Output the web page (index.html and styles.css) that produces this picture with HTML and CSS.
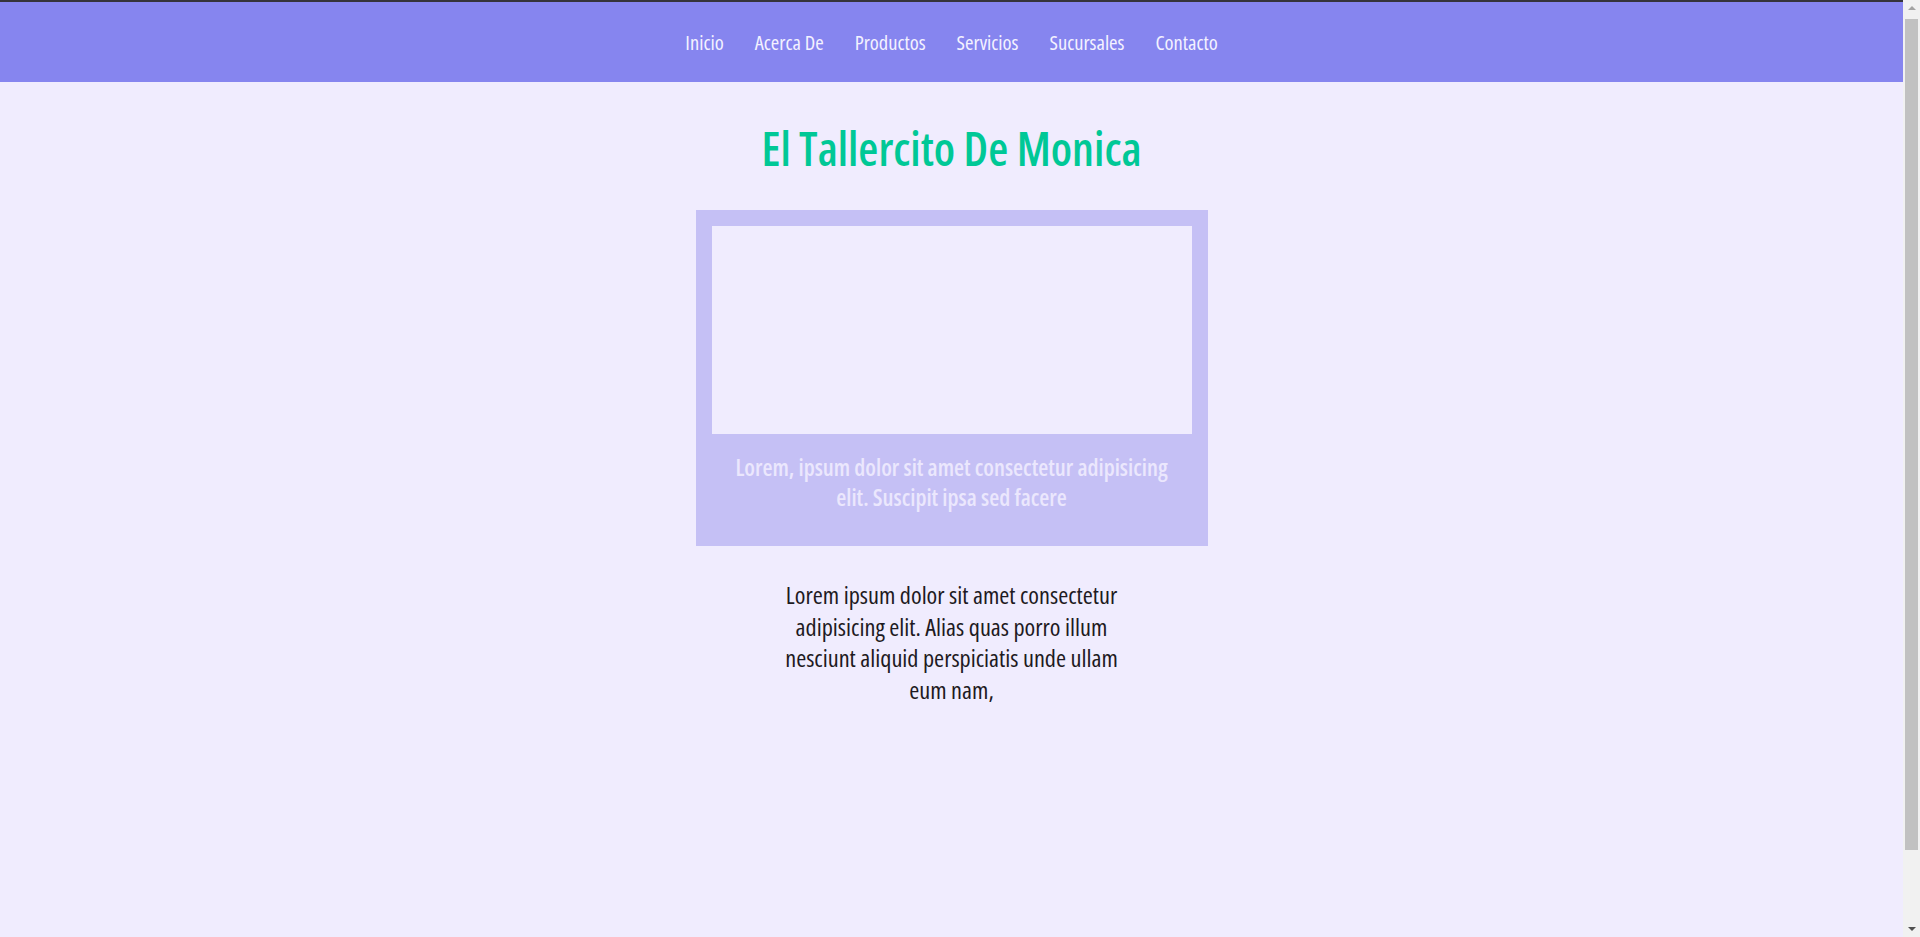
FILE: index.html
```html
<!DOCTYPE html>
<html lang="es">
<head>
<meta charset="utf-8">
<title>El Tallercito De Monica</title>
<link rel="stylesheet" href="styles.css">
</head>
<body>
<div class="page">
  <header class="topbar">
    <nav class="menu">
      <a href="#" class="menu-link">Inicio</a>
      <a href="#" class="menu-link">Acerca De</a>
      <a href="#" class="menu-link">Productos</a>
      <a href="#" class="menu-link">Servicios</a>
      <a href="#" class="menu-link">Sucursales</a>
      <a href="#" class="menu-link">Contacto</a>
    </nav>
  </header>
  <main class="content">
    <h1 class="title">El Tallercito De Monica</h1>
    <section class="card">
      <div class="card-image"></div>
      <p class="card-caption">Lorem, ipsum dolor sit amet consectetur adipisicing elit. Suscipit ipsa sed facere</p>
    </section>
    <p class="intro">Lorem ipsum dolor sit amet consectetur adipisicing elit. Alias quas porro illum nesciunt aliquid perspiciatis unde ullam eum nam,</p>
  </main>
</div>
<div class="scrollbar" aria-hidden="true">
  <span class="sb-arrow sb-up"></span>
  <span class="sb-track"><span class="sb-thumb"></span></span>
  <span class="sb-arrow sb-down"></span>
</div>
</body>
</html>
```
FILE: styles.css
```css
html, body {
  margin: 0;
  padding: 0;
}
body {
  background: #f0ecfe;
  font-family: "Open Sans", "Roboto", sans-serif;
  font-stretch: 75%;
  height: 937px;
  overflow: hidden;
}
.page {
  margin-right: 17px;
}
.topbar {
  background: #8685ef;
  border-top: 2px solid #35343b;
  height: 80px;
  display: flex;
  align-items: center;
  justify-content: center;
}
.menu {
  display: flex;
  gap: 31px;
}
.menu-link {
  color: #f4f2ff;
  text-decoration: none;
  font-size: 20.5px;
  font-weight: 520;
}
.content {
  display: flex;
  flex-direction: column;
  align-items: center;
}
.title {
  margin: 38px 0 0;
  font-size: 46px;
  line-height: 56px;
  font-weight: 600;
  color: #00c896;
}
.card {
  margin-top: 34px;
  width: 480px;
  padding: 16px;
  background: #c5c0f5;
}
.card-image {
  height: 208px;
  background: #f0ecfe;
}
.card-caption {
  margin: 18px 0 0;
  padding: 0 8px 18px;
  text-align: center;
  font-size: 23px;
  line-height: 30px;
  font-weight: 600;
  color: #ebe7fd;
}
.intro {
  margin: 33px 0 0;
  width: 350px;
  text-align: center;
  font-size: 24.3px;
  line-height: 31.5px;
  font-weight: 520;
  color: #1e1a22;
}
.scrollbar {
  position: fixed;
  top: 0;
  right: 0;
  width: 17px;
  height: 937px;
  background: #f1f1f1;
  display: flex;
  flex-direction: column;
  align-items: center;
}
.sb-arrow {
  width: 0;
  height: 0;
  border-left: 4px solid transparent;
  border-right: 4px solid transparent;
}
.sb-up {
  margin-top: 6px;
  border-bottom: 4px solid #a3a3a3;
}
.sb-down {
  margin-bottom: 6px;
  border-top: 4px solid #505050;
}
.sb-track {
  flex: 1;
  width: 100%;
  display: flex;
  flex-direction: column;
  align-items: center;
  padding-top: 9px;
}
.sb-thumb {
  width: 13px;
  height: 831px;
  background: #c1c1c1;
}
```
